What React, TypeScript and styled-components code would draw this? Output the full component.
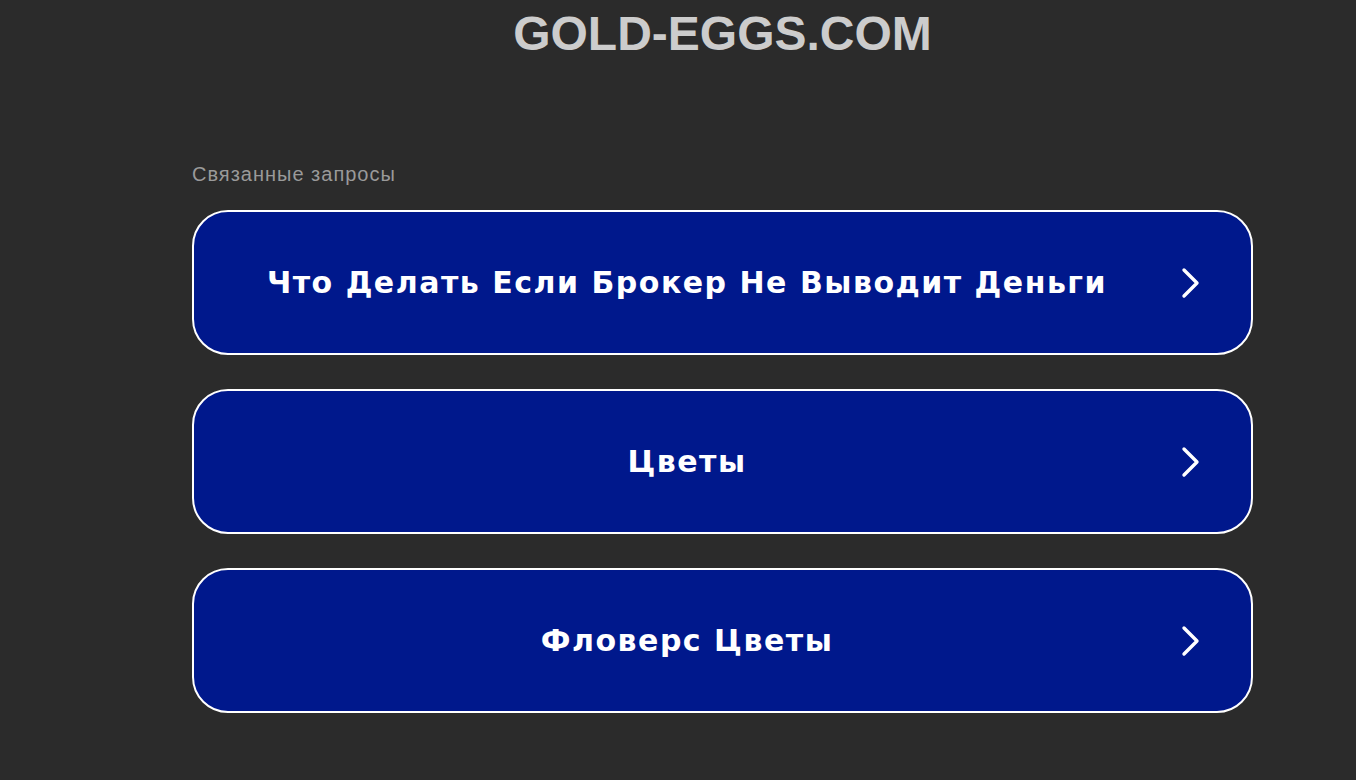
import React from "react";
import styled, { createGlobalStyle } from "styled-components";

const Global = createGlobalStyle`
  html, body { margin: 0; padding: 0; background: #2b2b2b; }
  body { font-family: Arial, "Liberation Sans", sans-serif; }
`;

const Page = styled.div`
  min-height: 780px;
  background: #2b2b2b;
  display: flex;
  flex-direction: column;
  padding-left: 192px;
  padding-right: 103px;
  box-sizing: border-box;
`;

const Title = styled.h1`
  margin: 8px 0 0;
  text-align: center;
  font-family: Arial, "Liberation Sans", sans-serif;
  font-weight: 700;
  font-size: 48px;
  line-height: 52px;
  color: #cccccc;
`;

const Section = styled.section`
  margin-top: 103px;
  display: flex;
  flex-direction: column;
`;

const Label = styled.div`
  font-family: Arial, "Liberation Sans", sans-serif;
  font-size: 20px;
  letter-spacing: 1px;
  line-height: 22px;
  color: #9a9a9a;
  margin-bottom: 25px;
`;

const List = styled.div`
  display: flex;
  flex-direction: column;
  gap: 34px;
`;

const Item = styled.a`
  display: flex;
  align-items: center;
  gap: 70px;
  height: 145px;
  box-sizing: border-box;
  border: 2px solid #ffffff;
  border-radius: 36px;
  background: #00188c;
  color: #ffffff;
  text-decoration: none;
  padding: 0 47px 0 70px;
  cursor: pointer;
`;

const ItemText = styled.span`
  flex: 1;
  text-align: center;
  font-family: "DejaVu Sans", Verdana, sans-serif;
  font-weight: 700;
  font-size: 30px;
  letter-spacing: 1.5px;
  line-height: 40px;
  white-space: nowrap;
`;

const Arrow = styled.svg`
  width: 24px;
  height: 32px;
  flex: none;
`;

const items = [
  "Что Делать Если Брокер Не Выводит Деньги",
  "Цветы",
  "Фловерс Цветы",
];

export default function App() {
  return (
    <>
      <Global />
      <Page>
        <Title>GOLD-EGGS.COM</Title>
        <Section>
          <Label>Связанные запросы</Label>
          <List>
            {items.map((t) => (
              <Item key={t}>
                <ItemText>{t}</ItemText>
                <Arrow viewBox="0 0 24 32">
                  <path
                    d="M4 3 L17 16 L4 29"
                    fill="none"
                    stroke="#fff"
                    strokeWidth="3.4"
                    strokeLinecap="round"
                    strokeLinejoin="round"
                  />
                </Arrow>
              </Item>
            ))}
          </List>
        </Section>
      </Page>
    </>
  );
}
